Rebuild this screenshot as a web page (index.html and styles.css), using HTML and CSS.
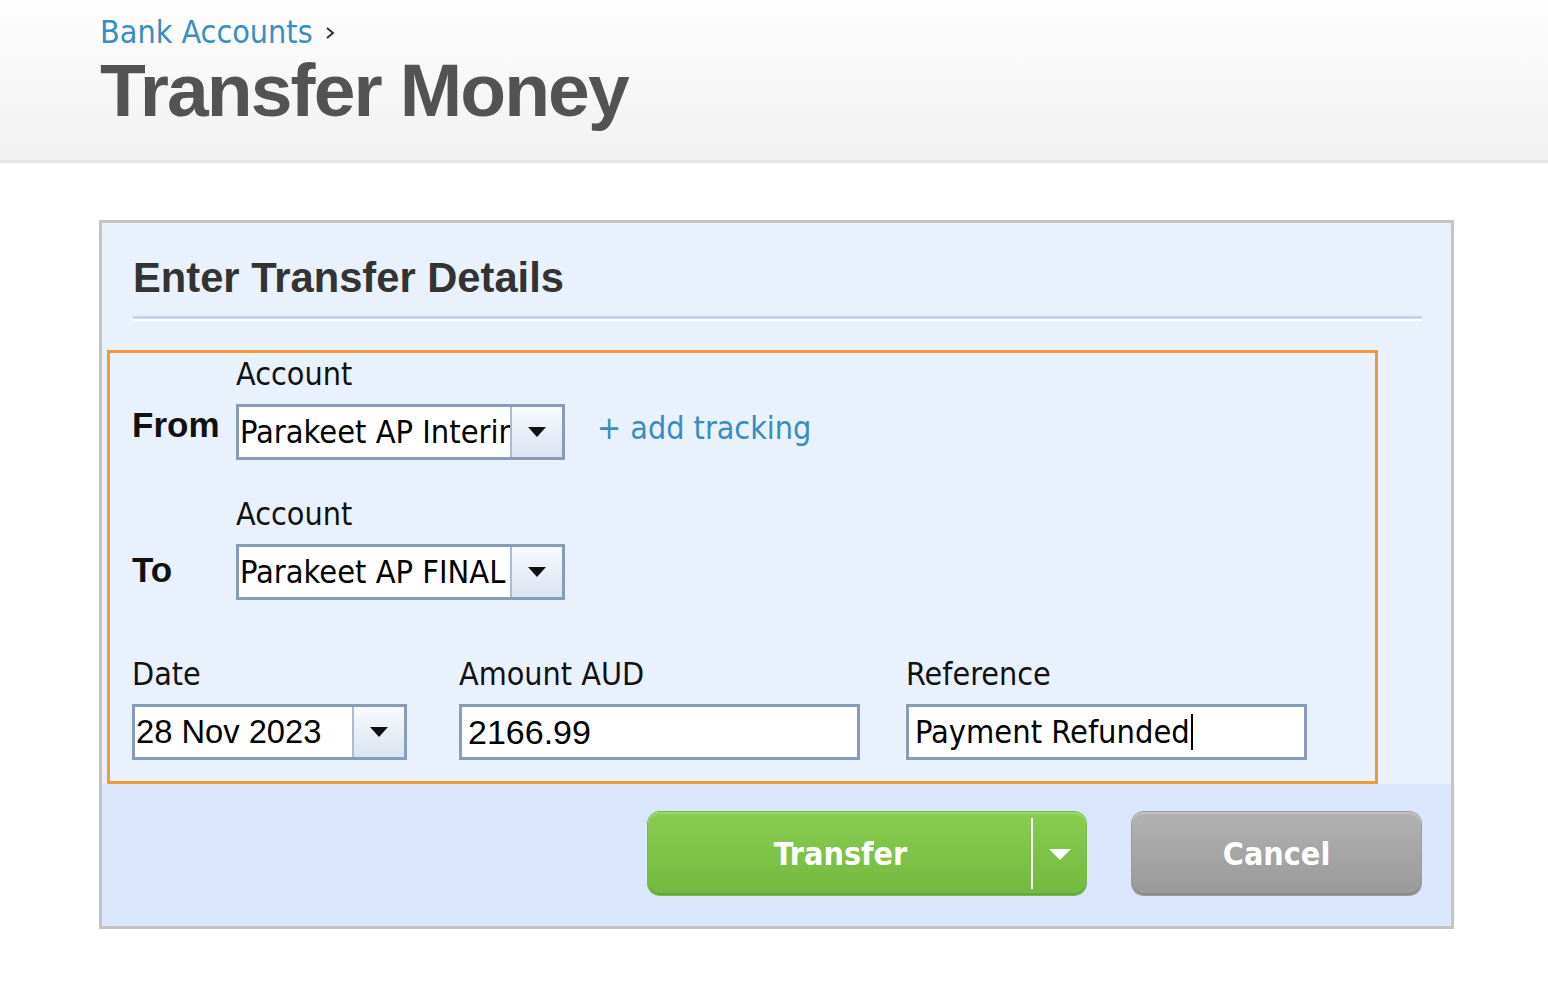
FILE: index.html
```html
<!DOCTYPE html>
<html lang="en">
<head>
<meta charset="utf-8">
<title>Transfer Money</title>
<link rel="stylesheet" href="styles.css">
</head>
<body>
<div class="header">
  <div class="crumb">
    <a class="crumb-link">Bank Accounts</a>
    <svg class="crumb-chev" width="12" height="16" viewBox="0 0 12 16"><polyline points="3,3 9,8 3,13" fill="none" stroke="#333" stroke-width="2"/></svg>
  </div>
  <h1 class="title">Transfer Money</h1>
</div>

<div class="main">
  <div class="panel">
    <div class="panel-body">
      <h2 class="panel-title">Enter Transfer Details</h2>
      <div class="sep"></div>
      <div class="highlight">
        <div class="acct-row">
          <div class="side side-from">From</div>
          <div class="field">
            <div class="label">Account</div>
            <div class="combo combo-acct">
              <span class="combo-text">Parakeet AP Interim</span>
              <span class="combo-btn"><svg width="18" height="10" viewBox="0 0 18 10"><polygon points="0,0 18,0 9,10" fill="#111"/></svg></span>
            </div>
          </div>
          <a class="tracking">+ add tracking</a>
        </div>
        <div class="acct-row acct-row-to">
          <div class="side side-to">To</div>
          <div class="field">
            <div class="label">Account</div>
            <div class="combo combo-acct">
              <span class="combo-text">Parakeet AP FINAL</span>
              <span class="combo-btn"><svg width="18" height="10" viewBox="0 0 18 10"><polygon points="0,0 18,0 9,10" fill="#111"/></svg></span>
            </div>
          </div>
        </div>
        <div class="detail-row">
          <div class="field">
            <div class="label">Date</div>
            <div class="combo combo-date">
              <span class="combo-text num">28 Nov 2023</span>
              <span class="combo-btn"><svg width="18" height="10" viewBox="0 0 18 10"><polygon points="0,0 18,0 9,10" fill="#111"/></svg></span>
            </div>
          </div>
          <div class="field">
            <div class="label">Amount AUD</div>
            <div class="input num">2166.99</div>
          </div>
          <div class="field">
            <div class="label">Reference</div>
            <div class="input">Payment Refunded<span class="caret"></span></div>
          </div>
        </div>
      </div>
    </div>
    <div class="panel-foot">
      <div class="btn-split">
        <span class="btn-main">Transfer</span>
        <span class="btn-divider"></span>
        <span class="btn-drop"><svg width="22" height="11" viewBox="0 0 22 11"><polygon points="0,0 22,0 11,11" fill="#fff"/></svg></span>
      </div>
      <div class="btn-cancel">Cancel</div>
    </div>
  </div>
</div>
</body>
</html>
```

FILE: styles.css
```css
* { box-sizing: border-box; }

body {
  margin: 0;
  background: #ffffff;
  font-family: "DejaVu Sans Condensed", "DejaVu Sans", sans-serif;
  font-stretch: condensed;
  color: #111;
}

.header {
  height: 163px;
  padding: 14px 0 0 100px;
  background: linear-gradient(#fefefe, #f1f1f1);
  border-bottom: 3px solid #e4e4e4;
}

.crumb {
  display: flex;
  align-items: center;
  height: 36px;
  font-size: 32px;
  line-height: 36px;
}

.crumb-link {
  color: #3b8dc5;
}

.crumb-chev {
  margin-left: 11px;
  margin-top: 2px;
}

.title {
  margin: 0;
  font-family: "Liberation Sans", Arial, sans-serif;
  font-stretch: normal;
  font-weight: bold;
  font-size: 75px;
  line-height: 80px;
  letter-spacing: -1.9px;
  color: #535353;
}

.main {
  padding: 57px 0 0 99px;
}

.panel {
  width: 1355px;
  border: 3px solid #c4c4c4;
  background: #e9f1fd;
  box-shadow: 0 8px 8px -5px rgba(0, 0, 0, 0.1);
}

.panel-body {
  padding: 31px 0 0 0;
}

.panel-title {
  margin: 0 0 0 31px;
  font-family: "Liberation Sans", Arial, sans-serif;
  font-stretch: normal;
  font-weight: bold;
  font-size: 41.7px;
  line-height: 48px;
  color: #333;
}

.sep {
  margin: 14px 29px 0 31px;
  height: 5px;
  border-top: 3px solid #c4d4ef;
  border-bottom: 2px solid #ffffff;
}

.highlight {
  margin: 29px 73px 0 5px;
  border: 3px solid #f0993b;
  padding: 2px 0 21px 22px;
}

.acct-row {
  display: flex;
  align-items: flex-end;
}

.acct-row-to {
  margin-top: 35px;
}

.side {
  width: 104px;
  font-family: "Liberation Sans", Arial, sans-serif;
  font-stretch: normal;
  font-weight: bold;
  font-size: 35px;
  line-height: 56px;
  color: #111;
}

.side-from { margin-bottom: 7px; }
.side-to { margin-bottom: 2px; }

.label {
  font-size: 32px;
  line-height: 38px;
  margin-bottom: 11px;
  color: #111;
}

.combo {
  display: flex;
  height: 56px;
  border: 3px solid #879db7;
  background: #fff;
}

.combo-acct { width: 329px; }
.combo-date { width: 275px; }

.combo-text {
  flex: 1;
  min-width: 0;
  overflow: hidden;
  white-space: nowrap;
  padding-left: 1px;
  font-size: 32.3px;
  line-height: 50px;
  color: #000;
}

.num {
  font-family: "Liberation Sans", Arial, sans-serif;
  font-stretch: normal;
  font-size: 33px;
}

.combo-text.num {
  font-size: 32.7px;
}

.combo-btn {
  width: 52px;
  flex: none;
  display: flex;
  align-items: center;
  justify-content: center;
  border-left: 2px solid #a9bcd4;
  background: linear-gradient(#f8fafd, #dae3f1);
}

.tracking {
  margin: 0 0 4px 32px;
  font-size: 32px;
  line-height: 56px;
  color: #3a8bc2;
}

.detail-row {
  margin-top: 55px;
  display: grid;
  grid-template-columns: 327px 447px 401px;
}

.input {
  width: 401px;
  height: 56px;
  border: 3px solid #879db7;
  background: #fff;
  padding-left: 6px;
  font-size: 32.3px;
  line-height: 50px;
  white-space: nowrap;
  color: #000;
  display: flex;
  align-items: center;
}

.input.num {
  font-size: 34px;
}

.caret {
  display: inline-block;
  width: 2px;
  height: 36px;
  background: #000;
  margin-left: 1px;
}

.panel-foot {
  background: #dae6fc;
  padding: 28px 30px 31px 0;
  display: flex;
  justify-content: flex-end;
  gap: 46px;
}

.btn-split {
  width: 438px;
  height: 83px;
  display: flex;
  align-items: stretch;
  border-radius: 12px;
  background: linear-gradient(#88cd52, #74b93f);
  box-shadow: inset 0 2px 0 #9ad966, inset 0 -2px 0 #68a737, 0 0 0 1px #78b948;
}

.btn-main {
  flex: 1;
  display: flex;
  align-items: center;
  justify-content: center;
  font-weight: bold;
  font-size: 32px;
  color: #fff;
  padding-left: 2px;
}

.btn-divider {
  width: 2px;
  margin: 6px 0;
  background: #ffffff;
}

.btn-drop {
  width: 53px;
  display: flex;
  align-items: center;
  justify-content: center;
  padding-top: 2px;
}

.btn-cancel {
  width: 289px;
  height: 83px;
  display: flex;
  align-items: center;
  justify-content: center;
  border-radius: 12px;
  background: linear-gradient(#b2b2b2, #999999);
  box-shadow: inset 0 2px 0 #c0c0c0, inset 0 -2px 0 #8a8a8a, 0 0 0 1px #9c9c9c;
  font-weight: bold;
  font-size: 32px;
  color: #fff;
}
```
